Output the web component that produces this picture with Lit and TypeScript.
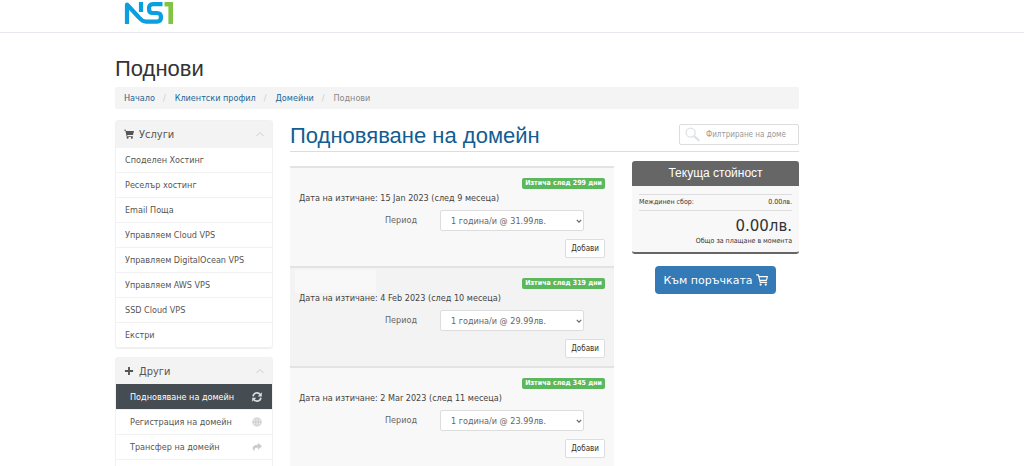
import { LitElement, html, css, svg } from "lit";
import { customElement, property } from "lit/decorators.js";

const icons = {
  cartSolid: svg`<path fill="currentColor" d="M0 1h3l.5 2H16l-1.600 6.500H5.200l.3 1.500H14v1.500H4.200L2.200 2.500H0z"/><circle fill="currentColor" cx="5.800" cy="14" r="1.600"/><circle fill="currentColor" cx="12.600" cy="14" r="1.600"/>`,
  plus: svg`<path stroke="currentColor" stroke-width="3" d="M8 1.500v13M1.500 8h13"/>`,
  chevron: svg`<path fill="none" stroke="currentColor" stroke-width="2" d="M1 12l7-7 7 7"/>`,
  caret: svg`<path fill="none" stroke="currentColor" stroke-width="3" d="M2 5l6 6 6-6"/>`,
  refresh: svg`<path fill="none" stroke="currentColor" stroke-width="2.600" d="M1.800 7A6.200 6.200 0 0 1 13 4M14.200 9A6.200 6.200 0 0 1 3 12"/><path fill="currentColor" d="M15.700 .3v6.700H9zM.3 15.700V9H7z"/>`,
  globe: svg`<circle cx="8" cy="8" r="7.500" fill="currentColor"/><path fill="none" stroke="#fff" stroke-width=".7" d="M0 5h16M0 11h16M8 0v16M7 0c-4.500 4-4.500 12 0 16M9 0c4.500 4 4.500 12 0 16"/>`,
  share: svg`<path fill="currentColor" d="M9.500 1L16 6.800 9.500 12.500V9.200C5 9.200 3 10.500 4.200 15 -.5 12-1 4.500 9.500 4.500z"/>`,
  cartLine: svg`<path fill="none" stroke="currentColor" stroke-width="1.500" stroke-linejoin="round" stroke-linecap="round" d="M.8 1.200h2.400L5.500 11.200h8.700M3.800 3.500H15.200L13.900 8.500H5"/><circle cx="6.200" cy="14" r="1.500" fill="currentColor"/><circle cx="13" cy="14" r="1.500" fill="currentColor"/>`,
  search: svg`<circle cx="6" cy="6" r="4.800" fill="none" stroke="currentColor" stroke-width="1.500"/><path stroke="currentColor" stroke-width="2.600" stroke-linecap="round" d="M10 10l4.500 4"/>`,
};

type IconName = keyof typeof icons;

@customElement("ui-icon")
export class UiIcon extends LitElement {
  static styles = css`
    :host { display: inline-flex; width: 10px; height: 10px; flex: none; }
    svg { width: 100%; height: 100%; display: block; }
  `;
  @property() name: IconName = "plus";
  render() {
    return html`<svg viewBox="0 0 16 16" aria-hidden="true">${icons[this.name]}</svg>`;
  }
}

interface Item { label: string; icon?: IconName; active?: boolean; }

@customElement("side-panel")
export class SidePanel extends LitElement {
  static styles = css`
    :host { display: block; border: 1px solid #f1f1f1; border-radius: 3px; box-shadow: 0 1px 1px #eee; }
    .head {
      display: flex; align-items: center; gap: 5px; height: 26px; padding: 0 8px;
      background: #f3f3f3; font-size: 11px; font-weight: 400; color: #555; margin: 0;
    }
    .title { flex: 1; }
    .chevron { color: #ccc; width: 8px; height: 8px; }
    .item {
      display: flex; align-items: center; justify-content: space-between; box-sizing: border-box;
      height: 25px; padding: 0 10px 0 9px; border-top: 1px solid #f1f1f1;
      color: #555; text-decoration: none; font-size: 9px;
    }
    .item:first-child { border-top-color: #f3f3f3; }
    .nested { padding-left: 14px; }
    .item ui-icon { color: #ccc; }
    .item.active { background: #454d53; border-color: #454d53; color: #fff; }
    .active ui-icon { color: #ddd; }
  `;
  @property() heading = "";
  @property() icon: IconName = "plus";
  @property({ type: Boolean }) nested = false;
  @property({ attribute: false }) items: Item[] = [];
  render() {
    return html`
      <h3 class="head"><ui-icon name=${this.icon}></ui-icon><span class="title">${this.heading}</span>
        <ui-icon class="chevron" name="chevron"></ui-icon></h3>
      <nav>${this.items.map((i) => html`
        <a href="#" class="item ${this.nested ? "nested" : ""} ${i.active ? "active" : ""}">
          <span>${i.label}</span>${i.icon ? html`<ui-icon name=${i.icon}></ui-icon>` : ""}
        </a>`)}</nav>`;
  }
}

@customElement("domain-renewal")
export class DomainRenewal extends LitElement {
  static styles = css`
    :host { display: block; border-top: 2px solid #e3e3e3; padding: 10px 9px; background: #f8f8f8; height: 100px; box-sizing: border-box; }
    :host(.alt) { background: #f3f3f3; }
    .status { display: flex; justify-content: space-between; }
    .name { width: 81px; margin: -8px 0 -4px -4px; background: #f8f8f8; }
    .badge { background: #5cb85c; color: #fff; border-radius: 2px; font-size: 7px; font-weight: 700; line-height: 11px; padding: 0 3px; }
    .expiry { font-size: 9px; line-height: 12px; margin: 3px 0 6px; color: #444; }
    .period { display: grid; grid-template-columns: 118px 144px; column-gap: 23px; color: #666; }
    .label { font-size: 9px; line-height: 20px; text-align: right; }
    .field { display: grid; align-items: center; }
    .select, .caret { grid-area: 1 / 1; }
    .select {
      appearance: none; font: inherit; font-size: 9px; color: #666; height: 21px; border: 1px solid #ddd;
      border-radius: 2px; background: #fff; padding: 0 10px; width: 100%;
    }
    .caret { width: 6px; height: 6px; justify-self: end; margin-right: 2px; pointer-events: none; }
    .actions { display: flex; justify-content: flex-end; margin-top: 8px; }
    .button { font: inherit; font-size: 8px; height: 19px; color: #333; background: #fff; border: 1px solid #ddd; border-radius: 2px; padding: 0 5px; }
  `;
  @property() days = "";
  @property() expiry = "";
  @property() price = "";
  render() {
    return html`
      <div class="status"><span class="name"></span><span class="badge">Изтича след ${this.days} дни</span></div>
      <p class="expiry">Дата на изтичане: ${this.expiry}</p>
      <div class="period">
        <label class="label" for="period">Период</label>
        <div class="field">
          <select class="select" id="period"><option>1 година/и @ ${this.price}лв.</option></select>
          <ui-icon class="caret" name="caret"></ui-icon>
        </div>
      </div>
      <div class="actions"><button class="button">Добави</button></div>`;
  }
}

@customElement("app-root")
export class AppRoot extends LitElement {
  static styles = css`
    :host {
      display: block; height: 100vh; overflow: hidden; background: #fff; color: #333;
      font-family: "DejaVu Sans Condensed", "DejaVu Sans", sans-serif;
    }
    .top { height: 32px; border-bottom: 1px solid #e6e8ef; box-sizing: content-box; }
    .wrap { max-width: 684px; margin-left: 115px; }
    .logo { display: block; width: 49px; margin-left: 9px; padding-top: 2px; }
    .logo svg { display: block; width: 100%; }
    h1, h2, .total-title { font-family: "Liberation Sans", Arial, sans-serif; font-weight: 400; margin: 0; }
    .page-title { font-size: 22px; line-height: 26px; padding: 23px 0 5px; }
    .crumbs {
      display: flex; list-style: none; margin: 0 0 11px; padding: 0 9px; background: #f4f4f4;
      border-radius: 2px; font-size: 9px; line-height: 22px; color: #888;
    }
    .crumbs li + li::before { content: "/"; color: #ccc; padding: 0 9px 0 8px; }
    .crumbs a { color: #1b6696; text-decoration: none; }
    .layout { display: grid; grid-template-columns: 158px 1fr; gap: 17px; align-items: start; }
    .sidebar { display: grid; gap: 9px; }
    .heading { display: flex; justify-content: space-between; align-items: center; height: 31px; border-bottom: 1px solid #ddd; margin-bottom: 9px; }
    .heading h2 { font-size: 22px; color: #135d92; }
    .search { display: flex; align-items: center; gap: 6px; width: 120px; height: 21px; box-sizing: border-box; border: 1px solid #ddd; border-radius: 2px; padding: 0 8px 0 5px; margin-bottom: 3px; }
    .search ui-icon { width: 15px; height: 15px; color: #dfe3e8; }
    .search input { flex: 1; min-width: 0; border: 0; padding: 0; outline: 0; background: none; font: inherit; font-size: 8px; }
    .search input::placeholder { color: #999; }
    .columns { display: grid; grid-template-columns: 1fr 167px; gap: 18px; align-items: start; }
    .domains { margin-top: 5px; }
    .summary { background: #f8f8f8; border-bottom: 2px solid #666; border-radius: 3px; }
    .total-title { background: #666; color: #fff; font-size: 12px; line-height: 25px; text-align: center; border-radius: 3px 3px 0 0; }
    .summary-body { padding: 8px 7px 6px; font-size: 7px; }
    .row { display: flex; justify-content: space-between; border: solid #ddd; border-width: 1px 0; line-height: 15px; }
    .amount { font-family: "DejaVu Sans", sans-serif; font-size: 15px; line-height: 20px; text-align: right; margin-top: 5px; }
    .note { line-height: 10px; text-align: right; }
    .checkout { display: flex; justify-content: center; margin-top: 12px; }
    .order { display: flex; align-items: center; gap: 3px; height: 28px; border: 0; border-radius: 4px; background: #337ab7; color: #fff; font-family: "DejaVu Sans", sans-serif; font-size: 11px; padding: 0 8px; }
    .order ui-icon { width: 12px; height: 12px; }
  `;
  private services: Item[] = ["Споделен Хостинг", "Реселър хостинг", "Email Поща", "Управляем Cloud VPS",
    "Управляем DigitalOcean VPS", "Управляем AWS VPS", "SSD Cloud VPS", "Екстри"].map((label) => ({ label }));
  private others: Item[] = [
    { label: "Подновяване на домейн", icon: "refresh", active: true },
    { label: "Регистрация на домейн", icon: "globe" },
    { label: "Трансфер на домейн", icon: "share" },
    { label: "" },
  ];
  render() {
    return html`
      <header class="top"><div class="wrap"><a class="logo" href="#" aria-label="NS1">
        <svg viewBox="0 0 49 22">
          <g fill="none" stroke="#0b9fe0" stroke-width="4.200" stroke-linejoin="round">
            <path d="M3 22V2.500L15 15.500Q18.500 19.600 22 19.600H33Q37 19.600 37 15.300Q37 11 33 11H28.500Q25 11 25 6.700Q25 2.100 29 2.100H38.500"/>
            <path d="M17 0V10"/>
          </g>
          <path d="M40.500 0H49v22h-4.600V4.500h-3.900z" fill="#82c341"/>
        </svg></a></div></header>
      <div class="wrap">
        <h1 class="page-title">Поднови</h1>
        <ol class="crumbs">
          <li><a href="#">Начало</a></li><li><a href="#">Клиентски профил</a></li>
          <li><a href="#">Домейни</a></li><li>Поднови</li>
        </ol>
        <div class="layout">
          <aside class="sidebar">
            <side-panel heading="Услуги" icon="cartSolid" .items=${this.services}></side-panel>
            <side-panel heading="Други" icon="plus" nested .items=${this.others}></side-panel>
          </aside>
          <main>
            <div class="heading"><h2>Подновяване на домейн</h2>
              <label class="search"><ui-icon name="search"></ui-icon>
                <input type="text" aria-label="Филтриране на доме" placeholder="Филтриране на доме"></label>
            </div>
            <div class="columns">
              <section class="domains">
                <domain-renewal days="299" expiry="15 Jan 2023 (след 9 месеца)" price="31.99"></domain-renewal>
                <domain-renewal class="alt" days="319" expiry="4 Feb 2023 (след 10 месеца)" price="29.99"></domain-renewal>
                <domain-renewal days="345" expiry="2 Mar 2023 (след 11 месеца)" price="23.99"></domain-renewal>
              </section>
              <section>
                <div class="summary">
                  <h2 class="total-title">Текуща стойност</h2>
                  <div class="summary-body">
                    <div class="row"><span>Междинен сбор:</span><span>0.00лв.</span></div>
                    <div class="amount">0.00лв.</div>
                    <div class="note">Общо за плащане в момента</div>
                  </div>
                </div>
                <div class="checkout"><button class="order">Към поръчката <ui-icon name="cartLine"></ui-icon></button></div>
              </section>
            </div>
          </main>
        </div>
      </div>`;
  }
}
